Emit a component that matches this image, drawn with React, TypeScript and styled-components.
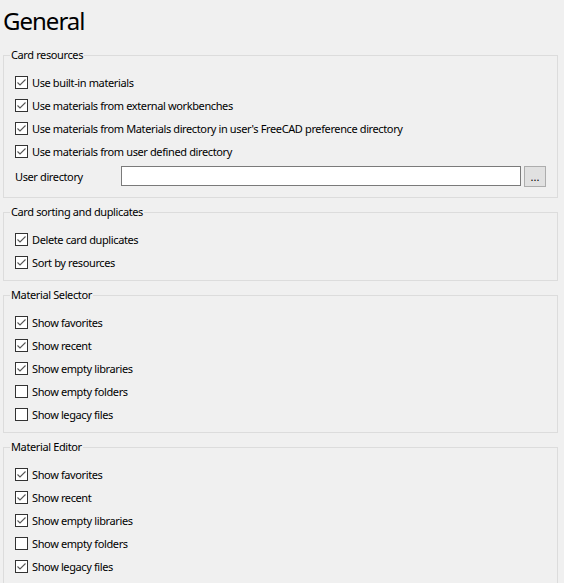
import React from "react";
import styled, { createGlobalStyle } from "styled-components";

const Global = createGlobalStyle`
  html, body { margin: 0; padding: 0; background: #f0f0f0; }
  body {
    font-family: "Noto Sans", "Open Sans", sans-serif;
    font-size: 11px;
    letter-spacing: -0.38px;
    color: #000;
  }
`;

const Page = styled.div`
  padding: 5px 6px 0 3px;
  display: flex;
  flex-direction: column;
`;

const Title = styled.h1`
  margin: 0 0 10px 0;
  font-size: 24px;
  line-height: 32px;
  font-weight: 400;
  letter-spacing: -1px;
`;

const Groups = styled.div`
  display: flex;
  flex-direction: column;
  gap: 6px;
`;

const Group = styled.fieldset<{ $pb?: number }>`
  margin: 0;
  min-width: 0;
  border: 1px solid #dcdcdc;
  padding: 0 11px ${(p) => p.$pb ?? 6}px 11px;
  display: flex;
  flex-direction: column;
`;

const Legend = styled.legend`
  padding: 0 1px;
  margin-left: -5px;
  line-height: 16px;
`;

const Rows = styled.div`
  padding-top: 8px;
  display: flex;
  flex-direction: column;
`;

const Row = styled.label`
  height: 23px;
  display: flex;
  align-items: center;
  gap: 4px;
  line-height: 16px;
  white-space: nowrap;
`;

const Box = styled.span`
  width: 13px;
  height: 13px;
  box-sizing: border-box;
  border: 1px solid #333;
  background: #fff;
  display: flex;
  align-items: center;
  justify-content: center;
  flex: none;
`;

const DirRow = styled.div`
  margin-top: 3px;
  height: 20px;
  display: flex;
  align-items: center;
`;

const DirLabel = styled.span`
  width: 106px;
  flex: none;
`;

const DirInput = styled.div`
  flex: 1;
  height: 20px;
  box-sizing: border-box;
  border: 1px solid #7a7a7a;
  background: #fff;
`;

const DirButton = styled.div`
  margin-left: 3px;
  width: 22px;
  height: 21px;
  box-sizing: border-box;
  border: 1px solid #adadad;
  background: #e1e1e1;
  display: flex;
  align-items: flex-end;
  justify-content: center;
  line-height: 14px;
  padding-bottom: 2px;
  letter-spacing: 0;
`;

const Check = ({ on }: { on: boolean }) => (
  <Box>
    {on && (
      <svg width="11" height="11" viewBox="0 0 11 11">
        <polyline points="1.5,5.5 4,8 9.5,2.5" fill="none" stroke="#555" strokeWidth="1.1" />
      </svg>
    )}
  </Box>
);

const Item = ({ on, children }: { on: boolean; children: React.ReactNode }) => (
  <Row>
    <Check on={on} />
    <span>{children}</span>
  </Row>
);

export default function App() {
  return (
    <>
      <Global />
      <Page>
        <Title>General</Title>
        <Groups>
          <Group $pb={11}>
            <Legend>Card resources</Legend>
            <Rows>
              <Item on>Use built-in materials</Item>
              <Item on>Use materials from external workbenches</Item>
              <Item on>Use materials from Materials directory in user's FreeCAD preference directory</Item>
              <Item on>Use materials from user defined directory</Item>
            </Rows>
            <DirRow>
              <DirLabel>User directory</DirLabel>
              <DirInput />
              <DirButton>...</DirButton>
            </DirRow>
          </Group>
          <Group>
            <Legend>Card sorting and duplicates</Legend>
            <Rows>
              <Item on>Delete card duplicates</Item>
              <Item on>Sort by resources</Item>
            </Rows>
          </Group>
          <Group>
            <Legend>Material Selector</Legend>
            <Rows>
              <Item on>Show favorites</Item>
              <Item on>Show recent</Item>
              <Item on>Show empty libraries</Item>
              <Item on={false}>Show empty folders</Item>
              <Item on={false}>Show legacy files</Item>
            </Rows>
          </Group>
          <Group>
            <Legend>Material Editor</Legend>
            <Rows>
              <Item on>Show favorites</Item>
              <Item on>Show recent</Item>
              <Item on>Show empty libraries</Item>
              <Item on={false}>Show empty folders</Item>
              <Item on>Show legacy files</Item>
            </Rows>
          </Group>
        </Groups>
      </Page>
    </>
  );
}
